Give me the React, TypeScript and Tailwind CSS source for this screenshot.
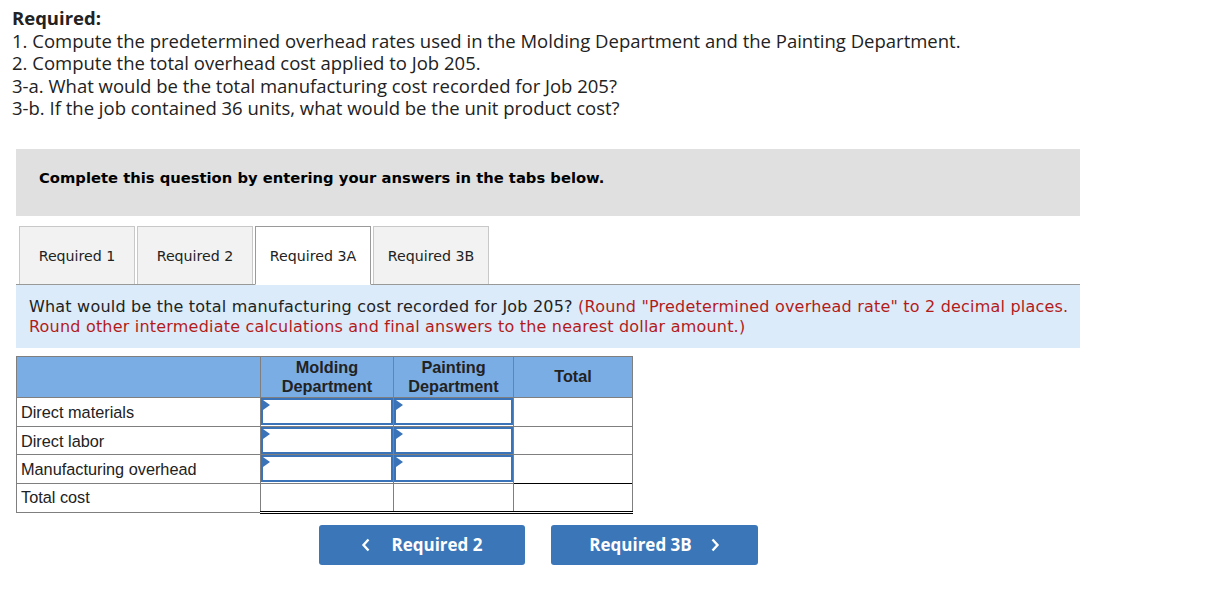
import React from 'react';

const rows = [
  { label: 'Direct materials', h: 'h-[29px]' },
  { label: 'Direct labor', h: 'h-[28px]' },
  { label: 'Manufacturing overhead', h: 'h-[29px]' },
];

function InputCell() {
  return (
    <td className="border border-[#7f7f7f] p-0">
      <div className="relative h-full min-h-[27px] border-2 border-[#3b73b9] bg-white">
        <span className="absolute left-0 top-0 w-0 h-0 border-y-[5px] border-y-transparent border-l-[7px] border-l-[#3b73b9]" />
      </div>
    </td>
  );
}

export default function App() {
  const tabs = ['Required 1', 'Required 2', 'Required 3A', 'Required 3B'];
  return (
    <div className="w-[1207px] h-[616px] bg-white text-black font-['Open_Sans',sans-serif]">
      <div className="pl-[12px] pt-[7px] text-[18.5px] leading-[22.5px] text-[#222]">
        <p className="font-bold">Required:</p>
        <p>1. Compute the predetermined overhead rates used in the Molding Department and the Painting Department.</p>
        <p>2. Compute the total overhead cost applied to Job 205.</p>
        <p>3-a. What would be the total manufacturing cost recorded for Job 205?</p>
        <p>3-b. If the job contained 36 units, what would be the unit product cost?</p>
      </div>

      <div className="mx-[16px] w-[1064px]">
        <div className="mt-[29px] h-[67px] bg-[#e0e0e0] pl-[23px] pb-[8px] flex items-center font-['DejaVu_Sans',sans-serif] font-bold text-[14.75px] text-black">
          Complete this question by entering your answers in the tabs below.
        </div>

        <div className="mt-[10px] flex gap-[2px] pl-[3px] border-b border-[#999] font-['DejaVu_Sans',sans-serif] text-[14.2px] text-[#222]">
          {tabs.map((t, i) =>
            i === 2 ? (
              <div key={t} className="h-[59px] -mb-px w-[116px] pt-[3px] bg-white border border-[#9a9a9a] border-b-white flex items-center justify-center">
                {t}
              </div>
            ) : (
              <div key={t} className="h-[58px] w-[116px] pt-[3px] bg-[#f2f2f2] border border-[#c8c8c8] border-b-0 flex items-center justify-center">
                {t}
              </div>
            )
          )}
        </div>

        <div className="h-[63px] bg-[#dbebf9] pl-[13px] pt-[12px] font-['DejaVu_Sans',sans-serif] text-[16px] tracking-[0.2px] leading-[20px] text-[#222]">
          What would be the total manufacturing cost recorded for Job 205?{' '}
          <span className="text-[#b31b1b]">
            (Round "Predetermined overhead rate" to 2 decimal places.
            <br />
            Round other intermediate calculations and final answers to the nearest dollar amount.)
          </span>
        </div>

        <table className="mt-[8px] border-collapse font-['Liberation_Sans',sans-serif] text-[16.3px] text-[#222] table-fixed w-[616px]">
          <colgroup>
            <col className="w-[244px]" />
            <col className="w-[133px]" />
            <col className="w-[120px]" />
            <col className="w-[119px]" />
          </colgroup>
          <thead>
            <tr className="bg-[#7aade4] h-[41px] font-bold text-center leading-[19px]">
              <th className="border border-[#7f7f7f]" />
              <th className="border border-[#7f7f7f]">Molding<br />Department</th>
              <th className="border border-[#7f7f7f]">Painting<br />Department</th>
              <th className="border border-[#7f7f7f]">Total</th>
            </tr>
          </thead>
          <tbody>
            {rows.map((r, i) => (
              <tr key={r.label} className={r.h}>
                <td className="border border-[#7f7f7f] px-[4px] pt-[2px]">{r.label}</td>
                <InputCell />
                <InputCell />
                <td className={`border border-[#7f7f7f] ${i === 2 ? 'border-b-black' : ''}`} />
              </tr>
            ))}
            <tr className="h-[29px]">
              <td className="border border-[#7f7f7f] px-[4px]">Total cost</td>
              <td className="border border-[#7f7f7f] border-b-[3px] border-b-black border-double" />
              <td className="border border-[#7f7f7f] border-b-[3px] border-b-black border-double" />
              <td className="border border-[#7f7f7f] border-b-[3px] border-b-black border-double border-t-black" />
            </tr>
          </tbody>
        </table>

        <div className="mt-[11px] flex gap-[26px] pl-[303px] font-['Open_Sans',sans-serif] font-bold text-[17px] text-white">
          <button className="w-[206px] h-[40px] bg-[#3b76b8] rounded-[3px] flex items-center justify-center gap-[20px]">
            <svg width="10" height="14" viewBox="0 0 10 14" fill="none" stroke="white" strokeWidth="2.4">
              <path d="M7.5 1.5 L2.5 7 L7.5 12.5" />
            </svg>
            Required 2
          </button>
          <button className="w-[207px] h-[40px] bg-[#3b76b8] rounded-[3px] flex items-center justify-center gap-[18px]">
            Required 3B
            <svg width="10" height="14" viewBox="0 0 10 14" fill="none" stroke="white" strokeWidth="2.4">
              <path d="M2.5 1.5 L7.5 7 L2.5 12.5" />
            </svg>
          </button>
        </div>
      </div>
    </div>
  );
}
